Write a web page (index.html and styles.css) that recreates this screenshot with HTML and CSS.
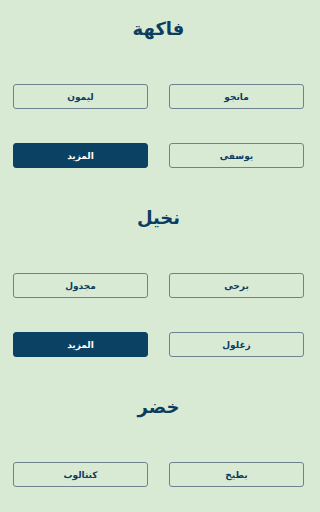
FILE: index.html
```html
<!DOCTYPE html>
<html lang="ar" dir="rtl">
<head>
<meta charset="utf-8">
<meta name="viewport" content="width=device-width, initial-scale=1">
<link rel="stylesheet" href="styles.css">
</head>
<body>
<main class="page">
  <section class="group">
    <h2 class="title">فاكهة</h2>
    <div class="grid">
      <button class="btn">مانجو</button>
      <button class="btn">ليمون</button>
      <button class="btn">يوسفى</button>
      <button class="btn more">المزيد</button>
    </div>
  </section>
  <section class="group">
    <h2 class="title">نخيل</h2>
    <div class="grid">
      <button class="btn">برحى</button>
      <button class="btn">مجدول</button>
      <button class="btn">زغلول</button>
      <button class="btn more">المزيد</button>
    </div>
  </section>
  <section class="group">
    <h2 class="title">خضر</h2>
    <div class="grid">
      <button class="btn">بطيخ</button>
      <button class="btn">كنتالوب</button>
    </div>
  </section>
</main>
</body>
</html>
```

FILE: styles.css
```css
html, body {
  margin: 0;
  padding: 0;
  background: #d9ead4;
}
body {
  font-family: "DejaVu Sans", "Noto Sans", sans-serif;
  color: #0c3d5f;
}
.page {
  padding: 14px 16px 0 13px;
}
.group {
  padding-bottom: 35px;
}
.title {
  margin: 0 0 40px;
  height: 30px;
  line-height: 30px;
  text-align: center;
  font-size: 18px;
  font-weight: bold;
  color: #0c3d5f;
}
.grid {
  display: grid;
  grid-template-columns: 1fr 1fr;
  column-gap: 21px;
  row-gap: 34px;
}
.btn {
  height: 25px;
  margin: 0;
  padding: 0;
  border: 1px solid #6f8290;
  border-radius: 3px;
  background: transparent;
  font-family: inherit;
  font-size: 9px;
  font-weight: bold;
  color: #0c3d5f;
}
.btn.more {
  background: #0b4264;
  border-color: #0b4264;
  color: #ffffff;
}
```
